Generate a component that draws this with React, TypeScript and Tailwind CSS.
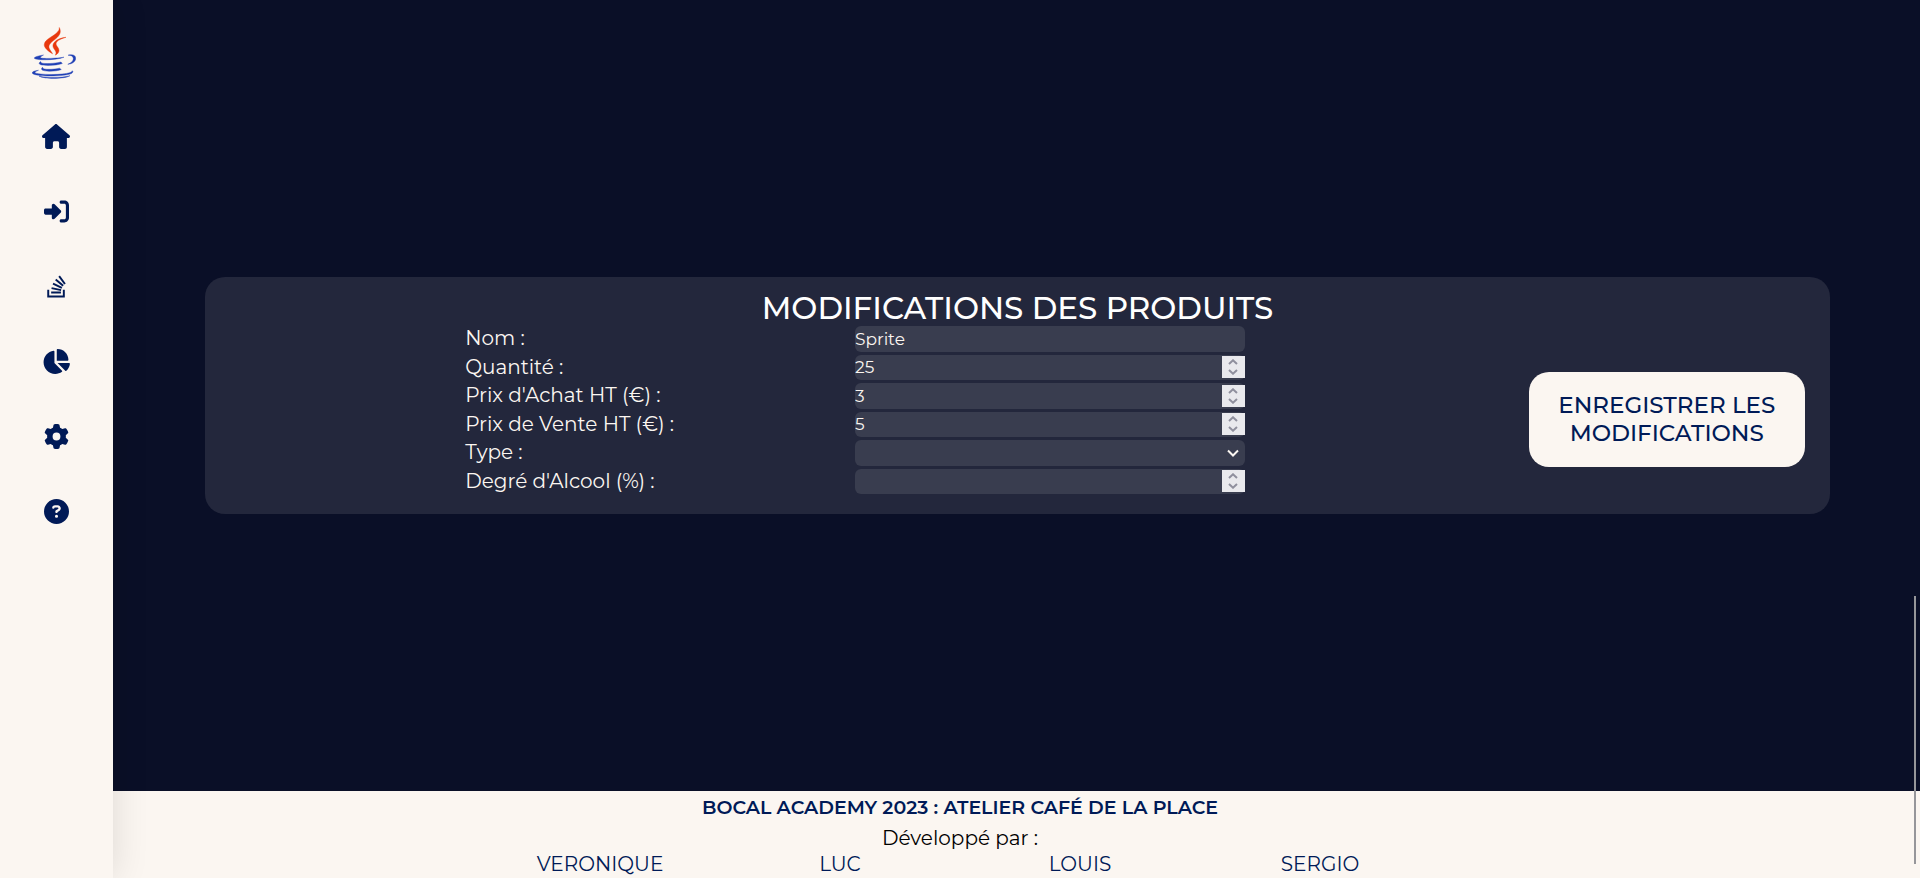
import type { ReactNode } from "react";
import { useState } from "react";
import { FaCircleQuestion, FaGear, FaRightToBracket, FaStackOverflow } from "react-icons/fa6";

const iconClass = "h-[25px] w-auto";

function HouseIcon() {
  return (
    <svg viewBox="0 0 576 512" className="h-[25px] w-[28px]" fill="currentColor" aria-hidden="true">
      <path d="M575.8 255.5c0 18-15 32.1-32 32.1l-32 0 .7 160.2c0 2.7-.2 5.4-.5 8.1l0 16.2c0 22.1-17.9 40-40 40l-16 0c-1.1 0-2.2 0-3.3-.1c-1.4 .1-2.8 .1-4.2 .1L416 512l-24 0c-22.1 0-40-17.9-40-40l0-24 0-64c0-17.7-14.3-32-32-32l-64 0c-17.7 0-32 14.3-32 32l0 64 0 24c0 22.1-17.9 40-40 40l-24 0-31.9 0c-1.5 0-3-.1-4.5-.2c-1.200 .1-2.400 .2-3.600 .2l-16 0c-22.100 0-40-17.900-40-40l0-112c0-.9 0-1.900 .1-2.800l0-69.700-32 0c-18 0-32-14-32-32.100c0-9 3-17 10-24L266.400 8c7-7 15-8 22-8s15 2 21 7L564.800 231.500c8 7 12 15 11 24z" />
    </svg>
  );
}

function PieIcon() {
  return (
    <svg viewBox="0 0 576 512" className="h-[25px] w-[28px]" fill="currentColor" aria-hidden="true">
      <path d="M304 240l0-223.400c0-9 7-16.600 16-16.600C443.700 0 544 100.300 544 224c0 9-7.600 16-16.600 16L304 240zM32 272C32 150.700 122.100 50.300 239 34.300c9.200-1.300 17 6.100 17 15.400L256 288 412.500 444.500c6.700 6.700 6.200 17.700-1.500 23.100C371.800 495.600 323.800 512 272 512C139.500 512 32 404.600 32 272zm526.400 16c9.300 0 16.600 7.800 15.400 17c-7.700 55.900-34.600 105.600-73.900 142.300c-6 5.600-15.400 5.200-21.200-.7L320 288l238.400 0z" />
    </svg>
  );
}

const links = [
  { label: "Accueil", icon: <HouseIcon /> },
  { label: "Connexion", icon: <FaRightToBracket className={iconClass} /> },
  { label: "Stock", icon: <FaStackOverflow className={iconClass} /> },
  { label: "Statistiques", icon: <PieIcon /> },
  { label: "Paramètres", icon: <FaGear className={iconClass} /> },
  { label: "Aide", icon: <FaCircleQuestion className={iconClass} /> },
];

const team = ["VERONIQUE", "LUC", "LOUIS", "SERGIO"];

function JavaLogo() {
  return (
    <svg viewBox="0 0 44 52" className="h-[52px] w-11" aria-hidden="true">
      <g fill="#e8380d" stroke="#e8380d" strokeWidth="0.4">
        <path d="M27.300 0.500C30 6 27 9.500 21.500 13.500C17 17 15.500 19.500 18.500 23.500C19.300 24.800 20.200 25.800 20.500 26.800C16 24 11.700 20.500 12.300 17.200C13.100 12.300 19.700 10.300 24 6.500C26.300 4.500 27.500 3 27.300 0.500Z" />
        <path d="M34 10.300C28 12 23.500 14.300 24.200 17.500C24.700 19.500 27 21 27 23.500C27 25.300 25.600 27.200 23.300 28.200C24.500 26.300 24.100 24.500 22.700 22.800C20.500 20.200 20.300 17.800 22.300 15.300C24.800 12.200 29.500 10.700 34 10.300Z" />
      </g>
      <g fill="#1f3fb5" stroke="#1f3fb5" strokeWidth="0.4">
        <path d="M11.500 28C5.500 29 2.500 30 2.300 31C2.100 33.500 24 33.500 32 30.200C25 31.300 10 32 8.500 30.800C8 30 9.500 29 11.500 28Z" />
        <path d="M36 28.200C40.500 26.800 44 28.500 43.700 31.500C43.500 34.800 40 37 35.800 37.300C39.500 35.800 41.500 33.800 41.300 31.300C41.100 29 39 28.300 36 28.200Z" />
        <path d="M8.500 34.500C5 37.500 9 38.300 16 38.400C22 38.400 27 37.700 30.300 36.500L29 35C22 36.600 13 37 9.500 36Z" />
        <path d="M10.500 40.300C7.500 43 11.500 44 17 44.200C22 44.300 26.500 43.700 29.300 42.500L27.500 41.200C22 42.500 15 42.700 11.500 41.800Z" />
        <path d="M6.500 43.300C2 43.800 -0.300 45 0.300 46.200C3 50 33 49.700 39.500 46.500C41 45.500 41.300 44.500 40.300 43.700C40 45.300 37 46.300 30 47C19 48 5 47.300 3 45.700C2.500 45 4.500 44 6.500 43.300Z" />
        <path d="M7 49.200C15 51 30 51 38 48.700C33 52 13 52.400 7 49.200Z" />
      </g>
    </svg>
  );
}

function Chevron({ up }: { up?: boolean }) {
  return (
    <svg viewBox="0 0 10 6" className="h-[6px] w-[10px]" fill="none" stroke="currentColor" strokeWidth="2" aria-hidden="true">
      <path d={up ? "M1 5L5 1.300L9 5" : "M1 1L5 4.700L9 1"} />
    </svg>
  );
}

function Row({ id, label, children }: { id: string; label: string; children: ReactNode }) {
  return (
    <>
      <label htmlFor={id} className="text-xl leading-6 whitespace-nowrap text-[#fbf6f1]">
        {label}
      </label>
      {children}
    </>
  );
}

function NumberRow({ id, label, initial }: { id: string; label: string; initial: string }) {
  const [value, setValue] = useState(initial);
  const step = (n: number) => setValue(String(Number(value || 0) + n));
  return (
    <Row id={id} label={label}>
      <div className="flex min-h-0 items-center rounded-md bg-[#393d4f]">
        <input
          id={id}
          type="number"
          value={value}
          onChange={(e) => setValue(e.target.value)}
          className="h-full min-w-0 flex-1 appearance-none bg-transparent text-[17px] text-[#fbf6f1] outline-none [appearance:textfield] [&::-webkit-inner-spin-button]:appearance-none"
        />
        <div className="flex h-[22px] w-[23px] flex-col bg-[#e9e9ed] py-px text-[#8f8f9d]">
          <button type="button" aria-label={`Augmenter ${label}`} onClick={() => step(1)} className="flex flex-1 items-center justify-center">
            <Chevron up />
          </button>
          <button type="button" aria-label={`Diminuer ${label}`} onClick={() => step(-1)} className="flex flex-1 items-center justify-center">
            <Chevron />
          </button>
        </div>
      </div>
    </Row>
  );
}

export default function App() {
  return (
    <div className="flex h-screen flex-col overflow-hidden bg-[#0a0f27] font-[Montserrat,Inter,sans-serif]">
      <nav className="fixed inset-y-0 left-0 z-10 flex w-[113px] flex-col items-center bg-[#fbf6f1] pt-[27px] pr-px text-[#001a57] shadow-[0_0_35px_rgba(0,0,0,0.12)]">
        <a href="#" aria-label="Café de la Place" className="mr-1 mb-[45px]">
          <JavaLogo />
        </a>
        <ul className="flex flex-col items-center gap-[50px]">
          {links.map((l) => (
            <li key={l.label}>
              <a href="#" aria-label={l.label} className="block">
                {l.icon}
              </a>
            </li>
          ))}
        </ul>
      </nav>

      <main className="flex flex-1 items-center pl-[115px]">
        <form className="mx-auto w-[90%] rounded-[20px] bg-[#23273c] pt-[13px] pb-5">
          <h1 className="text-center text-[31px] leading-9 font-medium text-white">MODIFICATIONS DES PRODUITS</h1>
          <div className="grid grid-cols-[16%_48%_1fr]">
            <div className="col-start-2 grid h-[168px] grid-cols-2 grid-rows-6 gap-y-[3px]">
              <Row id="nom" label="Nom :">
                <input id="nom" type="text" defaultValue="Sprite" className="min-h-0 rounded-md bg-[#393d4f] pt-px text-[17px] text-[#fbf6f1] outline-none" />
              </Row>
              <NumberRow id="quantite" label="Quantité :" initial="25" />
              <NumberRow id="achat" label="Prix d'Achat HT (€) :" initial="3" />
              <NumberRow id="vente" label="Prix de Vente HT (€) :" initial="5" />
              <Row id="type" label="Type :">
                <div className="relative min-h-0 rounded-md bg-[#393d4f] text-[#fbf6f1]">
                  <select id="type" defaultValue="" className="block h-full w-full appearance-none bg-transparent text-[17px] outline-none">
                    <option value="" />
                  </select>
                  <svg viewBox="0 0 12 8" className="pointer-events-none absolute top-[9px] right-[6px] h-2 w-3" fill="none" stroke="currentColor" strokeWidth="2" aria-hidden="true">
                    <path d="M1 1.500L6 6.500L11 1.500" />
                  </svg>
                </div>
              </Row>
              <NumberRow id="alcool" label="Degré d'Alcool (%) :" initial="" />
            </div>
            <button type="submit" className="mr-[25px] mb-[27px] w-[276px] self-end justify-self-end rounded-[20px] bg-[#fbf6f1] px-5 pt-[19px] pb-5 text-[23px] leading-7 font-medium text-[#001a57]">
              ENREGISTRER LES MODIFICATIONS
            </button>
          </div>
        </form>
      </main>

      <footer className="flex h-[87px] flex-col items-center bg-[#fbf6f1] pt-[5px] text-center text-xl">
        <h2 className="text-[19px] leading-6 font-semibold text-[#001a57]">BOCAL ACADEMY 2023 : ATELIER CAFÉ DE LA PLACE</h2>
        <p className="mt-[6px] leading-6 text-black">Développé par :</p>
        <ul className="mt-[2px] grid w-1/2 grid-cols-4 leading-6 text-[#001a57]">
          {team.map((name) => (
            <li key={name}>{name}</li>
          ))}
        </ul>
      </footer>

      <div className="fixed right-[4px] bottom-[14px] z-20 h-[268px] w-[2px] bg-[#96969a]" />
    </div>
  );
}
